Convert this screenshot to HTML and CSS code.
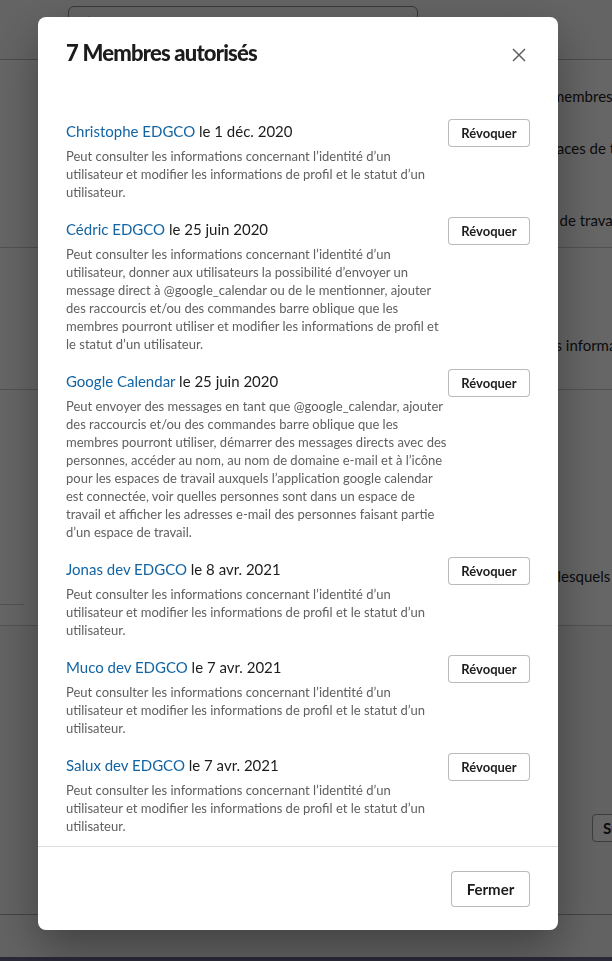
FILE: index.html
```html
<!DOCTYPE html>
<html lang="fr">
<head>
<meta charset="utf-8">
<title>7 Membres autorisés</title>
<link rel="stylesheet" href="styles.css">
</head>
<body>
<div class="page">
  <div class="topbar">
    <div class="search">
      <svg class="search-icon" width="14" height="14" viewBox="0 0 14 14"><circle cx="6" cy="6" r="4.5" fill="none" stroke="#1d1c1d" stroke-width="1.5"/><path d="M9.5 9.5 13 13" stroke="#1d1c1d" stroke-width="1.5"/></svg>
    </div>
  </div>
  <div class="content">
    <div class="bg-section s1">
      <p class="bg-text t1">membres de l’espace</p>
      <p class="bg-text t2">espaces de travail</p>
      <p class="bg-text t3">espaces de travail</p>
    </div>
    <div class="bg-section s2">
      <p class="bg-text t4">les informations</p>
    </div>
    <div class="bg-section s3">
      <p class="bg-text t5">dans lesquels</p>
      <div class="left-rule"></div>
    </div>
    <div class="bg-section s4">
      <button class="bg-btn">Supprimer</button>
    </div>
    <div class="bg-foot"></div>
  </div>
  <div class="bottom-bar"></div>
</div>

<div class="overlay">
  <div class="modal" role="dialog" aria-labelledby="modal-title">
    <header class="modal-header">
      <h1 id="modal-title" class="modal-title">7 Membres autorisés</h1>
      <button class="close" aria-label="Fermer">
        <svg width="14" height="14" viewBox="0 0 14 14"><path d="M1 1 13 13M13 1 1 13" stroke="#616061" stroke-width="1.5" fill="none"/></svg>
      </button>
    </header>
    <div class="modal-body">
      <div class="member">
        <div class="member-info">
          <div class="member-name"><a href="#">Christophe EDGCO</a> le 1 déc. 2020</div>
          <p class="member-desc">Peut consulter les informations concernant l’identité d’un utilisateur et modifier les informations de profil et le statut d’un utilisateur.</p>
        </div>
        <button class="revoke">Révoquer</button>
      </div>
      <div class="member">
        <div class="member-info">
          <div class="member-name"><a href="#">Cédric EDGCO</a> le 25 juin 2020</div>
          <p class="member-desc">Peut consulter les informations concernant l’identité d’un utilisateur, donner aux utilisateurs la possibilité d’envoyer un message direct à @google_calendar ou de le mentionner, ajouter des raccourcis et/ou des commandes barre oblique que les membres pourront utiliser et modifier les informations de profil et le statut d’un utilisateur.</p>
        </div>
        <button class="revoke">Révoquer</button>
      </div>
      <div class="member">
        <div class="member-info">
          <div class="member-name"><a href="#">Google Calendar</a> le 25 juin 2020</div>
          <p class="member-desc">Peut envoyer des messages en tant que @google_calendar, ajouter des raccourcis et/ou des commandes barre oblique que les membres pourront utiliser, démarrer des messages directs avec des personnes, accéder au nom, au nom de domaine e-mail et à l’icône pour les espaces de travail auxquels l’application google calendar est connectée, voir quelles personnes sont dans un espace de travail et afficher les adresses e-mail des personnes faisant partie d’un espace de travail.</p>
        </div>
        <button class="revoke">Révoquer</button>
      </div>
      <div class="member">
        <div class="member-info">
          <div class="member-name"><a href="#">Jonas dev EDGCO</a> le 8 avr. 2021</div>
          <p class="member-desc">Peut consulter les informations concernant l’identité d’un utilisateur et modifier les informations de profil et le statut d’un utilisateur.</p>
        </div>
        <button class="revoke">Révoquer</button>
      </div>
      <div class="member">
        <div class="member-info">
          <div class="member-name"><a href="#">Muco dev EDGCO</a> le 7 avr. 2021</div>
          <p class="member-desc">Peut consulter les informations concernant l’identité d’un utilisateur et modifier les informations de profil et le statut d’un utilisateur.</p>
        </div>
        <button class="revoke">Révoquer</button>
      </div>
      <div class="member">
        <div class="member-info">
          <div class="member-name"><a href="#">Salux dev EDGCO</a> le 7 avr. 2021</div>
          <p class="member-desc">Peut consulter les informations concernant l’identité d’un utilisateur et modifier les informations de profil et le statut d’un utilisateur.</p>
        </div>
        <button class="revoke">Révoquer</button>
      </div>
    </div>
    <footer class="modal-footer">
      <button class="close-btn">Fermer</button>
    </footer>
  </div>
</div>
</body>
</html>
```

FILE: styles.css
```css
* { box-sizing: border-box; }

html, body {
  margin: 0;
  padding: 0;
  height: 100%;
  overflow: hidden;
}

body {
  font-family: Lato, "Noto Sans", "Liberation Sans", sans-serif;
  color: #1d1c1d;
  background: #fff;
}

/* ---------- background page ---------- */
.page {
  height: 961px;
  display: flex;
  flex-direction: column;
  background: #fff;
}

.topbar {
  height: 60px;
  flex: none;
  border-bottom: 1px solid #bbb;
  padding: 6px 0 0 68px;
  background: #fafafa;
}

.search {
  width: 350px;
  height: 30px;
  border: 1px solid #8a8a8a;
  border-radius: 6px;
  padding: 7px 0 0 14px;
}

.content {
  flex: 1;
  display: flex;
  flex-direction: column;
}

.bg-section {
  border-bottom: 1px solid #ccc;
  position: relative;
}

.bg-text {
  margin: 0;
  font-size: 15px;
  line-height: 22px;
  color: #1d1c1d;
  white-space: nowrap;
}

.s1 { height: 188px; padding-top: 25px; }
.t1 { margin-left: 552px; }
.t2 { margin-left: 534px; margin-top: 30px; }
.t3 { margin-left: 504px; margin-top: 50px; }

.s2 { height: 142px; padding-top: 86px; }
.t4 { margin-left: 544px; }

.s3 { height: 236px; padding-top: 175px; }
.t5 { margin-left: 523px; }
.left-rule {
  position: absolute;
  left: 0;
  top: 214px;
  width: 24px;
  border-top: 1px solid #ccc;
}

.s4 { height: 289px; padding: 188px 0 0 592px; border-bottom: 1px solid #aaa; background: #f6f6f6; }
.bg-btn {
  font-family: inherit;
  font-size: 15px;
  font-weight: 700;
  height: 28px;
  padding: 0 10px;
  border: 1px solid #999;
  border-radius: 4px;
  background: #fff;
  color: #1d1c1d;
}

.bg-foot { flex: 1; background: #f6f6f6; }

.bottom-bar {
  height: 4px;
  flex: none;
  background: #69698a;
}

/* ---------- overlay & modal ---------- */
.overlay {
  position: fixed;
  inset: 0;
  background: rgba(0, 0, 0, 0.6);
  padding: 17px 0 0 38px;
}

.modal {
  width: 520px;
  height: 913px;
  background: #fff;
  border-radius: 8px;
  box-shadow: 0 18px 48px rgba(0, 0, 0, 0.35);
  display: flex;
  flex-direction: column;
  overflow: hidden;
}

.modal-header {
  display: flex;
  align-items: flex-start;
  justify-content: space-between;
  padding: 22px 21px 0 28px;
  flex: none;
}

.modal-title {
  margin: 0;
  font-size: 22px;
  line-height: 28px;
  font-weight: 900;
  letter-spacing: -0.8px;
  color: #1d1c1d;
}

.close {
  width: 36px;
  height: 36px;
  margin: -2px 0 -10px;
  border: 0;
  background: transparent;
  padding: 0;
  display: flex;
  align-items: center;
  justify-content: center;
}

.modal-body {
  flex: 1;
  padding: 52px 28px 10px;
  display: flex;
  flex-direction: column;
  gap: 16px;
  overflow: hidden;
}

.member {
  display: flex;
  align-items: flex-start;
}

.member-info {
  flex: 1;
  min-width: 0;
}

.member-name {
  font-size: 15px;
  line-height: 24px;
  color: #1d1c1d;
}

.member-name a {
  color: #1264a3;
  text-decoration: none;
}

.member-desc {
  margin: 4px 0 0;
  font-size: 13px;
  line-height: 18px;
  color: #616061;
}

.revoke {
  flex: none;
  width: 82px;
  height: 28px;
  font-family: inherit;
  font-size: 13px;
  font-weight: 700;
  color: #1d1c1d;
  background: #fff;
  border: 1px solid rgba(29, 28, 29, 0.3);
  border-radius: 4px;
  padding: 0;
}

.modal-footer {
  flex: none;
  border-top: 1px solid #ddd;
  padding: 24px 28px 23px;
  display: flex;
  justify-content: flex-end;
}

.close-btn {
  width: 79px;
  height: 36px;
  font-family: inherit;
  font-size: 15px;
  font-weight: 700;
  color: #1d1c1d;
  background: #fff;
  border: 1px solid rgba(29, 28, 29, 0.3);
  border-radius: 4px;
  padding: 0;
}
```
